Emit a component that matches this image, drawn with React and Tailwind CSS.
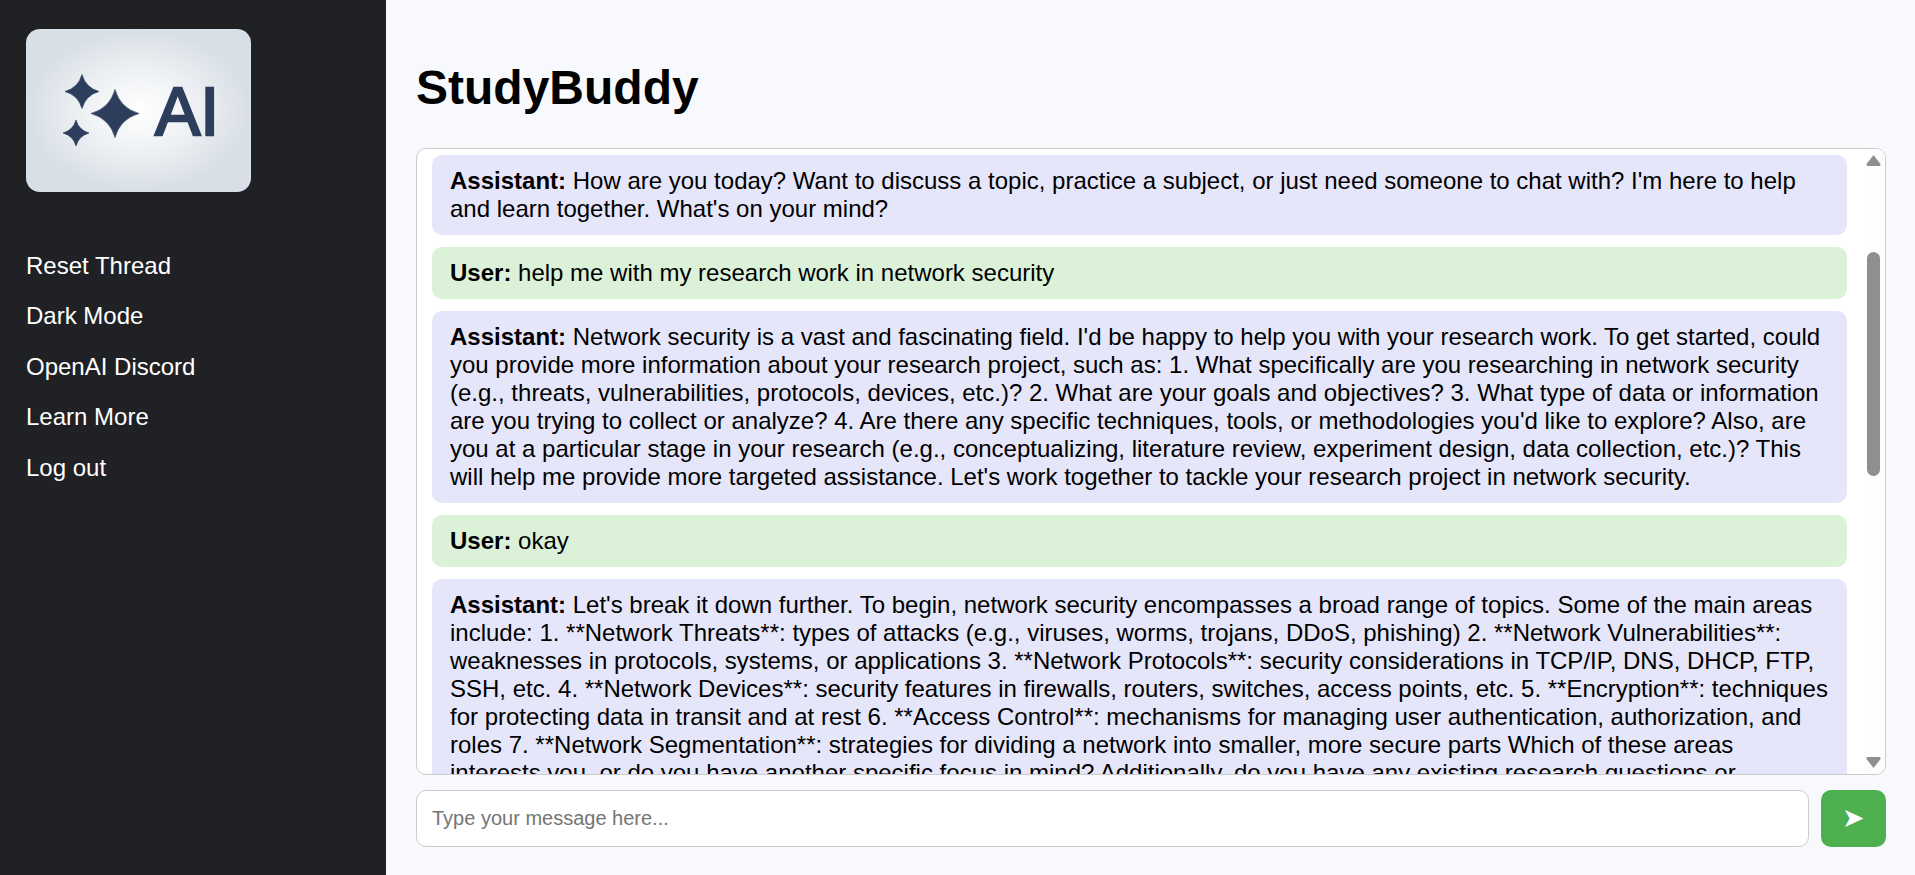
const items = ["Reset Thread", "Dark Mode", "OpenAI Discord", "Learn More", "Log out"];

const messages = [
  {
    role: "Assistant",
    text: "How are you today? Want to discuss a topic, practice a subject, or just need someone to chat with? I'm here to help and learn together. What's on your mind?",
  },
  { role: "User", text: "help me with my research work in network security" },
  {
    role: "Assistant",
    text: "Network security is a vast and fascinating field. I'd be happy to help you with your research work. To get started, could you provide more information about your research project, such as: 1. What specifically are you researching in network security (e.g., threats, vulnerabilities, protocols, devices, etc.)? 2. What are your goals and objectives? 3. What type of data or information are you trying to collect or analyze? 4. Are there any specific techniques, tools, or methodologies you'd like to explore? Also, are you at a particular stage in your research (e.g., conceptualizing, literature review, experiment design, data collection, etc.)? This will help me provide more targeted assistance. Let's work together to tackle your research project in network security.",
  },
  { role: "User", text: "okay" },
  {
    role: "Assistant",
    text: "Let's break it down further. To begin, network security encompasses a broad range of topics. Some of the main areas include: 1. **Network Threats**: types of attacks (e.g., viruses, worms, trojans, DDoS, phishing) 2. **Network Vulnerabilities**: weaknesses in protocols, systems, or applications 3. **Network Protocols**: security considerations in TCP/IP, DNS, DHCP, FTP, SSH, etc. 4. **Network Devices**: security features in firewalls, routers, switches, access points, etc. 5. **Encryption**: techniques for protecting data in transit and at rest 6. **Access Control**: mechanisms for managing user authentication, authorization, and roles 7. **Network Segmentation**: strategies for dividing a network into smaller, more secure parts Which of these areas interests you, or do you have another specific focus in mind? Additionally, do you have any existing research questions or",
  },
];

// four pointed star, k pulls the waist in
const star = (cx, cy, r, k = 0.22) => {
  const c = r * k;
  return `M${cx} ${cy - r} Q${cx + c} ${cy - c} ${cx + r} ${cy} Q${cx + c} ${cy + c} ${cx} ${cy + r} Q${cx - c} ${cy + c} ${cx - r} ${cy} Q${cx - c} ${cy - c} ${cx} ${cy - r}Z`;
};

const Logo = () => (
  <div className="w-[225px] h-[163px] rounded-[14px] bg-[radial-gradient(ellipse_at_center,#ffffff_0%,#eef1f4_35%,#d8dfe6_70%,#d8dfe6_100%)]">
    <svg width="225" height="163" viewBox="26 29 225 163" fill="#2c3e5c" stroke="#2c3e5c" strokeWidth="0.6" strokeLinejoin="round">
      <path d={star(82, 91.5, 17)} />
      <path d={star(115, 113.5, 24)} />
      <path d={star(76, 133, 13)} />
      <text x="155" y="135" strokeWidth="2.4" strokeLinejoin="miter" fontFamily="Liberation Sans, sans-serif" fontSize="68">AI</text>
    </svg>
  </div>
);

const Scrollbar = () => (
  <div className="absolute right-0 top-0 bottom-0 w-[19px] bg-[#fdfdfd]">
    <svg className="absolute left-0 top-[6px]" width="15" height="11" viewBox="0 0 15 11" fill="#8f8f8f">
      <path d="M7.5 0 L14.5 9 Q15 11 13 11 L2 11 Q0 11 .5 9Z" />
    </svg>
    <div className="absolute left-[1px] top-[103px] w-[13px] h-[224px] rounded-full bg-[#8f8f8f]" />
    <svg className="absolute left-0 bottom-[6px]" width="15" height="11" viewBox="0 0 15 11" fill="#8f8f8f">
      <path d="M7.5 11 L14.5 2 Q15 0 13 0 L2 0 Q0 0 .5 2Z" />
    </svg>
  </div>
);

export default function App() {
  return (
    <div className="flex h-[875px] bg-[#f8f9fd] text-black font-['Liberation_Sans',Arial,sans-serif] overflow-hidden">
      <aside className="w-[386px] shrink-0 bg-[#202124] pl-[26px] pt-[29px]">
        <Logo />
        <nav className="mt-[59.6px] flex flex-col gap-[22.5px]">
          {items.map((item) => (
            <a key={item} className="text-white text-[24px] leading-[28px]">
              {item}
            </a>
          ))}
        </nav>
      </aside>

      <main className="flex-1 flex flex-col pl-[30px] pr-[29px]">
        <h1 className="text-[48px] font-bold leading-[56px] mt-[60px] mb-[32px]">StudyBuddy</h1>

        <div className="relative h-[627px] bg-white border border-[#cccccc] rounded-[10px] overflow-hidden">
          <div className="flex flex-col gap-[12px] pt-[6px] pl-[15px] pr-[38px]">
            {messages.map((m, i) => (
              <div
                key={i}
                className={`rounded-[10px] px-[18px] py-[12px] text-[24px] leading-[28px] ${
                  m.role === "User" ? "bg-[#dbf2d9]" : "bg-[#e6e6fa]"
                }`}
              >
                <strong>{m.role}:</strong> {m.text}
              </div>
            ))}
          </div>
          <Scrollbar />
        </div>

        <div className="flex gap-[12px] mt-[15px]">
          <input
            placeholder="Type your message here..."
            className="flex-1 h-[57px] bg-white border border-[#cccccc] rounded-[10px] px-[15px] text-[20px] outline-none placeholder:text-[#757575]"
          />
          <button className="w-[65px] h-[57px] rounded-[10px] bg-[#4caf50] text-white text-[27px]">➤</button>
        </div>
      </main>
    </div>
  );
}
